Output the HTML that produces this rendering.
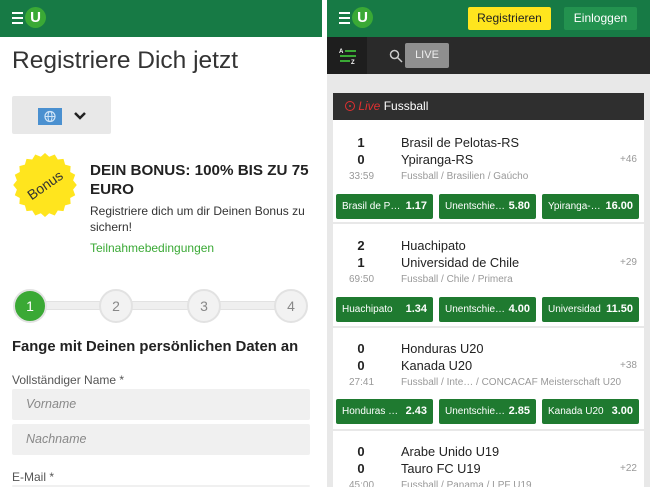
<!DOCTYPE html>
<html><head><meta charset="utf-8"><style>
*{box-sizing:border-box;margin:0;padding:0}
html,body{width:650px;height:487px;overflow:hidden}
body{background:#fff;font-family:"Liberation Sans",Arial,sans-serif;position:relative;color:#222}
.a{position:absolute}
.hdr{background:#177a45;height:37px;top:0}
.logo{left:12px;top:7px;width:34px;height:22px}
.bar{height:2px;width:11px;background:#fff;left:0}
.circ{left:13px;top:0;width:21px;height:21px;border-radius:50%;background:#3aa935;color:#fff;font-weight:bold;font-size:15px;text-align:center;line-height:21px}
.odd{height:25px;background:#1f7a30;border-radius:2px;color:#fff;font-size:10px;line-height:25px;padding:0 6px;display:flex;justify-content:space-between}
.odd span{overflow:hidden;white-space:nowrap;text-overflow:ellipsis;max-width:66px}
.odd b{font-size:11px;margin-left:3px}
.sc{font-size:13px;font-weight:bold;width:20px;text-align:center;color:#222}
.tm{font-size:12.8px;color:#222}
.mt{font-size:10px;color:#999}
.inp{left:12px;width:298px;height:31px;background:#f0f0f0;border-radius:2px;font-style:italic;color:#888;font-size:12.5px;padding-left:14px;line-height:31px}
.step{width:34px;height:34px;border-radius:50%;background:#f2f2f2;border:2px solid #e2e2e2;color:#888;font-size:14px;text-align:center;line-height:30px;top:289px}
</style></head><body>
<div class="a hdr" style="left:0;width:322px"></div>
<div class="a logo"><div class="a bar" style="top:5px"></div><div class="a bar" style="top:10px"></div><div class="a bar" style="top:15px"></div><div class="a circ">U</div></div>
<div class="a" style="left:12px;top:47px;font-size:24.5px;color:#333">Registriere Dich jetzt</div>
<div class="a" style="left:12px;top:96px;width:99px;height:38px;background:#e8e8e8;border-radius:2px"></div>
<div class="a" style="left:38px;top:108px;width:24px;height:17px;background:#4a90d0"><svg width="24" height="17"><circle cx="12" cy="8.5" r="5" fill="none" stroke="#cfe4f7" stroke-width="1.2"/><line x1="7" y1="8.5" x2="17" y2="8.5" stroke="#cfe4f7"/><ellipse cx="12" cy="8.5" rx="2" ry="5" fill="none" stroke="#cfe4f7"/></svg></div>
<svg class="a" style="left:73px;top:111px" width="14" height="10"><path d="M2 2 L7 7 L12 2" stroke="#222" stroke-width="2.5" fill="none"/></svg>
<svg class="a" style="left:12px;top:152px" width="66" height="66" viewBox="-33 -33 66 66"><polygon fill="#ffe51e" points="0,-32 4.2,-28.3 9.7,-30.5 12.8,-25.5 18.5,-26.1 20.1,-20.4 25.6,-18.9 25.2,-13 30.2,-10.2 28.1,-4.6 31.8,0 28.1,4.6 30.2,10.2 25.2,13 25.6,18.9 20.1,20.4 18.5,26.1 12.8,25.5 9.7,30.5 4.2,28.3 0,32 -4.2,28.3 -9.7,30.5 -12.8,25.5 -18.5,26.1 -20.1,20.4 -25.6,18.9 -25.2,13 -30.2,10.2 -28.1,4.6 -31.8,0 -28.1,-4.6 -30.2,-10.2 -25.2,-13 -25.6,-18.9 -20.1,-20.4 -18.5,-26.1 -12.8,-25.5 -9.7,-30.5 -4.2,-28.3"/><text x="0" y="5" font-size="14" text-anchor="middle" fill="#333" transform="rotate(-35)" font-family="Liberation Sans">Bonus</text></svg>
<div class="a" style="left:90px;top:161px;width:226px;font-size:15.2px;font-weight:bold;line-height:19px;color:#222">DEIN BONUS: 100% BIS ZU 75 EURO</div>
<div class="a" style="left:90px;top:203px;width:215px;font-size:12px;line-height:16px;color:#333">Registriere dich um dir Deinen Bonus zu sichern!</div>
<div class="a" style="left:90px;top:241px;font-size:12px;color:#3aa935">Teilnahmebedingungen</div>
<div class="a" style="left:30px;top:301px;width:262px;height:9px;background:#efefef;border-top:1px solid #e2e2e2;border-bottom:1px solid #e2e2e2"></div>
<div class="a step" style="left:13px;background:#3aa935;border-color:#e2e2e2;color:#fff">1</div>
<div class="a step" style="left:99px">2</div>
<div class="a step" style="left:187px">3</div>
<div class="a step" style="left:274px">4</div>
<div class="a" style="left:12px;top:339px;font-size:14.8px;font-weight:bold;color:#222">Fange mit Deinen persönlichen Daten an</div>
<div class="a" style="left:12px;top:373px;font-size:12px;color:#555">Vollständiger Name *</div>
<div class="a inp" style="top:389px">Vorname</div>
<div class="a inp" style="top:424px">Nachname</div>
<div class="a" style="left:12px;top:470px;font-size:12px;color:#555">E-Mail *</div>
<div class="a inp" style="top:485px;height:2px"></div>

<div class="a" style="left:327px;top:0;width:323px;height:487px;background:#e8e8e8"></div>
<div class="a hdr" style="left:327px;width:323px"></div>
<div class="a logo" style="left:339px"><div class="a bar" style="top:5px"></div><div class="a bar" style="top:10px"></div><div class="a bar" style="top:15px"></div><div class="a circ">U</div></div>
<div class="a" style="left:468px;top:7px;width:83px;height:23px;background:#ffe51e;border-radius:2px;font-size:12px;text-align:center;line-height:23px;color:#222">Registrieren</div>
<div class="a" style="left:564px;top:7px;width:73px;height:23px;background:#23924f;border-radius:2px;font-size:12px;text-align:center;line-height:23px;color:#fff">Einloggen</div>
<div class="a" style="left:327px;top:37px;width:323px;height:37px;background:#2a2a2a"></div>
<div class="a" style="left:327px;top:37px;width:40px;height:37px;background:#1e1e1e"></div>
<svg class="a" style="left:338px;top:46px" width="20" height="20"><text x="1" y="7" font-size="6" fill="#fff" font-weight="bold" font-family="Liberation Sans">A</text><line x1="7" y1="5" x2="18" y2="5" stroke="#3aa935" stroke-width="2"/><line x1="2" y1="10" x2="18" y2="10" stroke="#3aa935" stroke-width="2"/><line x1="2" y1="15" x2="12" y2="15" stroke="#3aa935" stroke-width="2"/><text x="13" y="18" font-size="6" fill="#fff" font-weight="bold" font-family="Liberation Sans">Z</text></svg>
<svg class="a" style="left:389px;top:49px" width="14" height="14"><circle cx="5.5" cy="5.5" r="4" stroke="#ccc" stroke-width="1.5" fill="none"/><line x1="8.5" y1="8.5" x2="13" y2="13" stroke="#ccc" stroke-width="1.5"/></svg>
<div class="a" style="left:405px;top:43px;width:44px;height:25px;background:#8f8f8f;border-radius:2px;color:#eee;font-size:11px;text-align:center;line-height:25px">LIVE</div>
<div class="a" style="left:333px;top:93px;width:311px;height:27px;background:#2f2f2f;font-size:12px;color:#fff;line-height:27px;padding-left:12px"><span style="display:inline-block;width:10px;height:10px;border:1.3px solid #e03030;border-radius:50%;vertical-align:-1px;position:relative"><span style="position:absolute;left:2.5px;top:2.5px;width:2.5px;height:2.5px;background:#e03030;border-radius:50%"></span></span> <i style="color:#e03030">Live</i> Fussball</div>
<div class="a" style="left:333px;top:120px;width:311px;height:367px;background:#fff"></div>

<div class="a" style="left:333px;top:222px;width:311px;height:2px;background:#e8e8e8"></div>
<div class="a" style="left:333px;top:326px;width:311px;height:2px;background:#e8e8e8"></div>
<div class="a" style="left:333px;top:429px;width:311px;height:2px;background:#e8e8e8"></div>

<div class="a sc" style="left:351px;top:135px">1</div><div class="a sc" style="left:351px;top:152px">0</div><div class="a mt" style="left:349px;top:171px">33:59</div>
<div class="a tm" style="left:401px;top:135px">Brasil de Pelotas-RS</div><div class="a tm" style="left:401px;top:152px">Ypiranga-RS</div>
<div class="a mt" style="left:401px;top:171px">Fussball / Brasilien / Gaúcho</div><div class="a mt" style="left:620px;top:154px">+46</div>
<div class="a odd" style="left:336px;top:194px;width:97px"><span>Brasil de Pelotas</span><b>1.17</b></div>
<div class="a odd" style="left:439px;top:194px;width:97px"><span>Unentschieden</span><b>5.80</b></div>
<div class="a odd" style="left:542px;top:194px;width:97px"><span>Ypiranga-RS</span><b>16.00</b></div>

<div class="a sc" style="left:351px;top:238px">2</div><div class="a sc" style="left:351px;top:255px">1</div><div class="a mt" style="left:349px;top:274px">69:50</div>
<div class="a tm" style="left:401px;top:238px">Huachipato</div><div class="a tm" style="left:401px;top:255px">Universidad de Chile</div>
<div class="a mt" style="left:401px;top:274px">Fussball / Chile / Primera</div><div class="a mt" style="left:620px;top:257px">+29</div>
<div class="a odd" style="left:336px;top:297px;width:97px"><span>Huachipato</span><b>1.34</b></div>
<div class="a odd" style="left:439px;top:297px;width:97px"><span>Unentschieden</span><b>4.00</b></div>
<div class="a odd" style="left:542px;top:297px;width:97px"><span>Universidad</span><b>11.50</b></div>

<div class="a sc" style="left:351px;top:341px">0</div><div class="a sc" style="left:351px;top:358px">0</div><div class="a mt" style="left:349px;top:377px">27:41</div>
<div class="a tm" style="left:401px;top:341px">Honduras U20</div><div class="a tm" style="left:401px;top:358px">Kanada U20</div>
<div class="a mt" style="left:401px;top:377px">Fussball / Inte… / CONCACAF Meisterschaft U20</div><div class="a mt" style="left:620px;top:360px">+38</div>
<div class="a odd" style="left:336px;top:399px;width:97px"><span style="max-width:70px">Honduras U20</span><b>2.43</b></div>
<div class="a odd" style="left:439px;top:399px;width:97px"><span>Unentschieden</span><b>2.85</b></div>
<div class="a odd" style="left:542px;top:399px;width:97px"><span>Kanada U20</span><b>3.00</b></div>

<div class="a sc" style="left:351px;top:444px">0</div><div class="a sc" style="left:351px;top:461px">0</div><div class="a mt" style="left:349px;top:480px">45:00</div>
<div class="a tm" style="left:401px;top:444px">Arabe Unido U19</div><div class="a tm" style="left:401px;top:461px">Tauro FC U19</div>
<div class="a mt" style="left:401px;top:480px">Fussball / Panama / LPF U19</div><div class="a mt" style="left:620px;top:463px">+22</div>
</body></html>
